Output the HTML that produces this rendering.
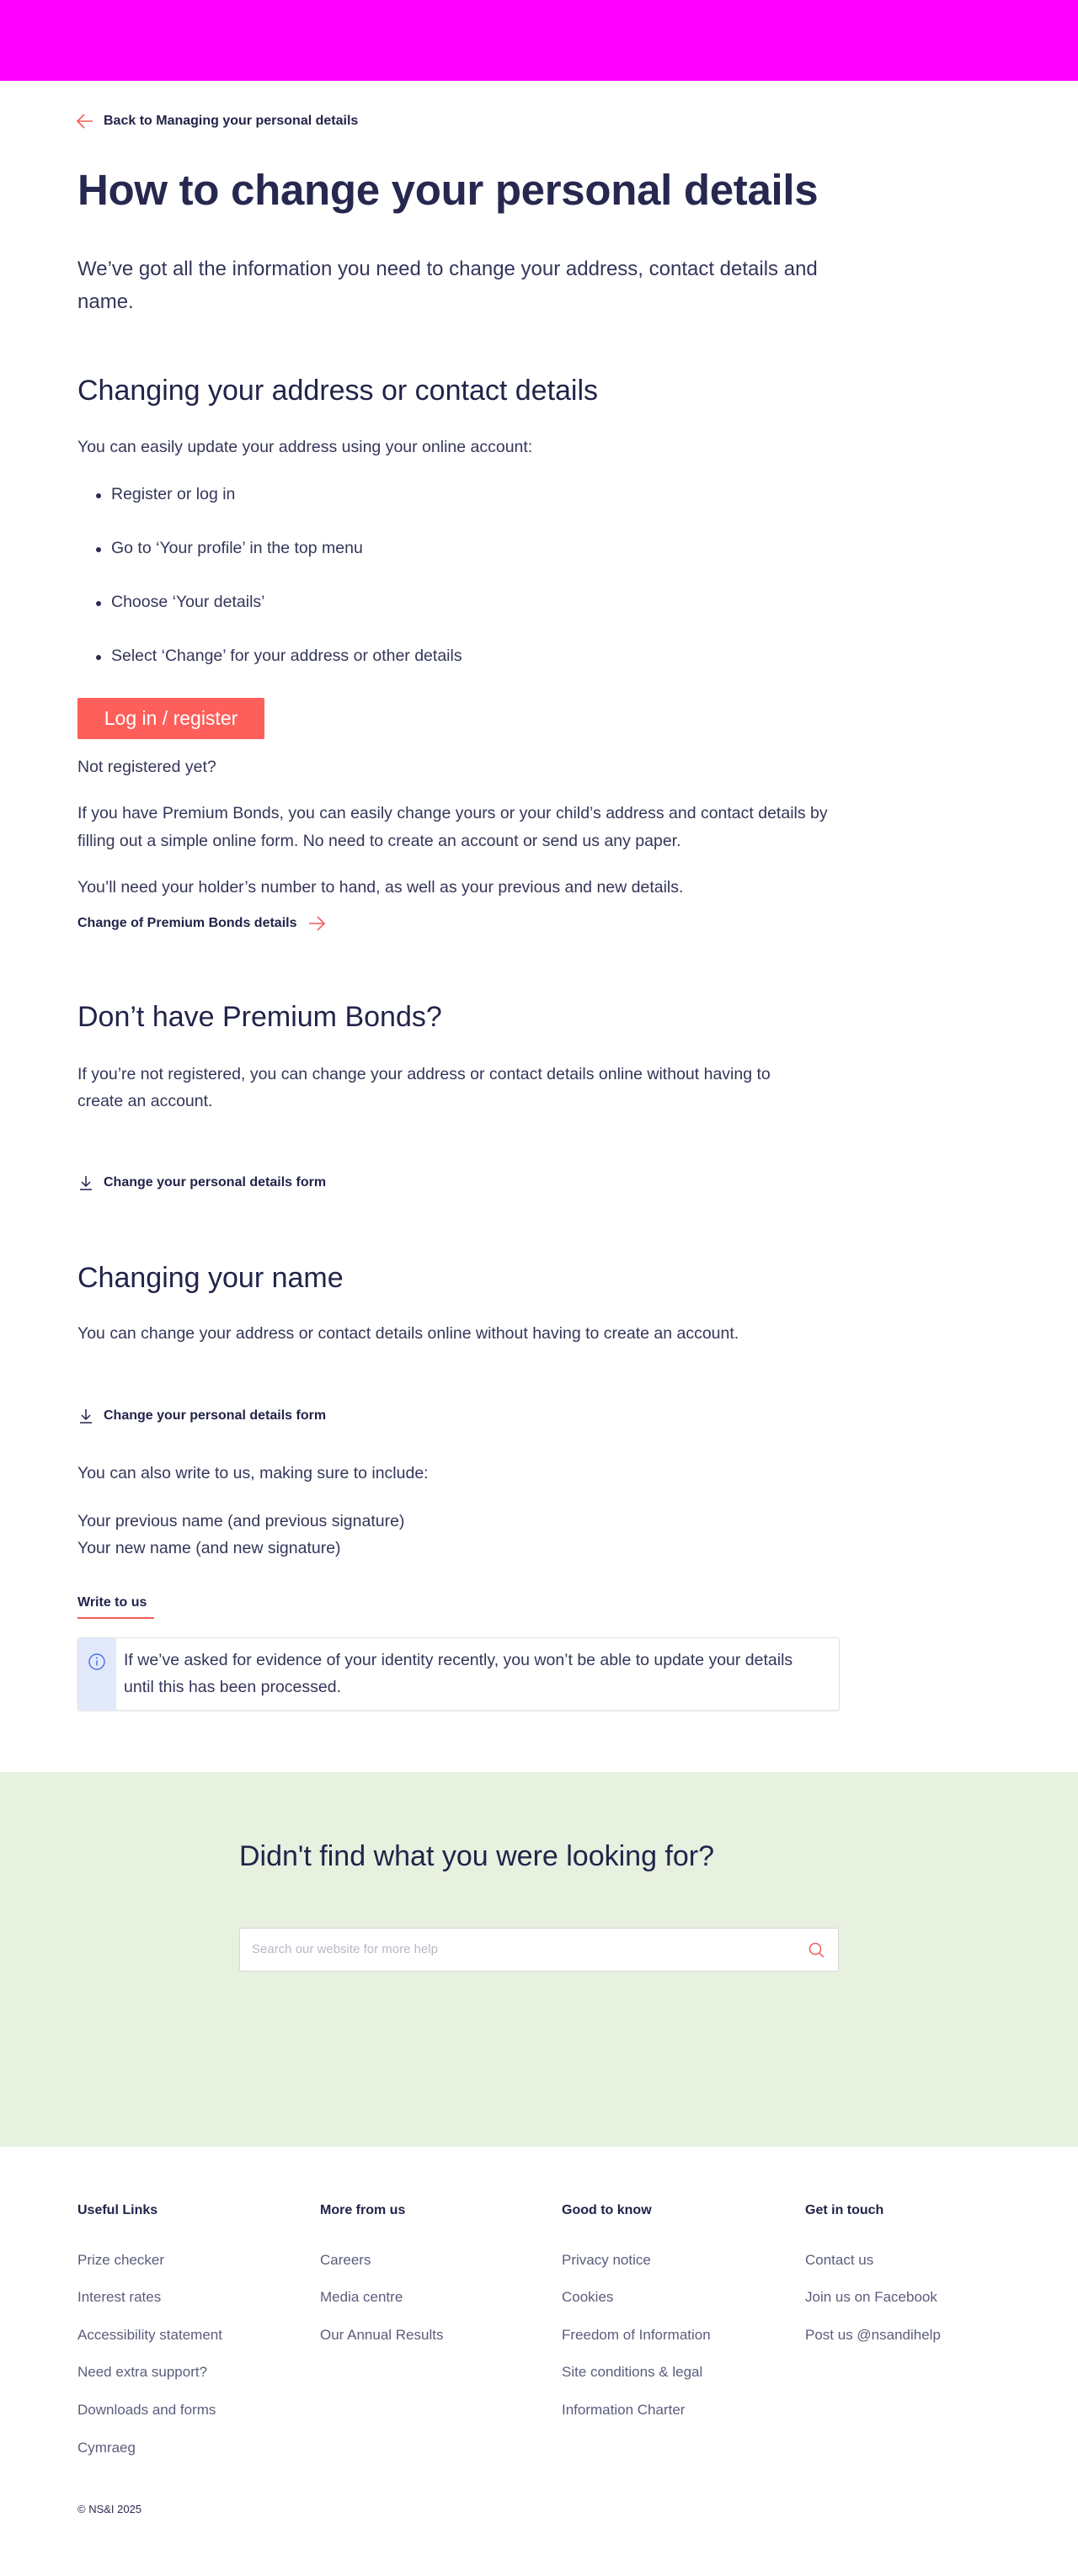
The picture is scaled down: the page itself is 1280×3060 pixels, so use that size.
<!DOCTYPE html>
<html><head><meta charset="utf-8"><style>
*{margin:0;padding:0;box-sizing:border-box}
body{width:1280px;height:3060px;position:relative;background:#fff;font-family:"Liberation Sans",sans-serif;color:#2b2c52;overflow:hidden}
.a{position:absolute;white-space:nowrap}
.p{font-size:19.5px;line-height:32px;color:#34365a}
.h2{font-size:34px;line-height:40px;color:#22244a}
.lk{font-size:16px;font-weight:bold;line-height:24px;color:#22244a}
.fh{font-size:16px;font-weight:bold;line-height:24px;color:#22244a}
.fl{font-size:17px;line-height:24px;color:#5b5d7c}
.dot{position:absolute;width:6px;height:6px;border-radius:50%;background:#2b2c52}
</style></head><body>
<div class="a" style="left:0;top:0;width:1280px;height:96px;background:#ff00ff"></div>

<svg class="a" style="left:91px;top:135px" width="20" height="18" viewBox="0 0 20 18"><path d="M9 1L1 9l8 8M1 9h18" fill="none" stroke="#f25c56" stroke-width="1.6"/></svg>
<div class="a" style="left:123px;top:132px;font-size:16px;line-height:24px;font-weight:bold;color:#22244a">Back to Managing your personal details</div>

<div class="a" style="left:92px;top:196px;font-size:51px;line-height:60px;font-weight:bold;color:#26284f;letter-spacing:-0.3px">How to change your personal details</div>

<div class="a" style="left:92px;top:300px;font-size:24px;line-height:39px;color:#34365a;white-space:normal;width:920px">We’ve got all the information you need to change your address, contact details and name.</div>

<div class="a h2" style="left:92px;top:444px">Changing your address or contact details</div>
<div class="a p" style="left:92px;top:515px">You can easily update your address using your online account:</div>
<div class="dot" style="left:114px;top:586px"></div><div class="a p" style="left:132px;top:571px">Register or log in</div>
<div class="dot" style="left:114px;top:650px"></div><div class="a p" style="left:132px;top:635px">Go to ‘Your profile’ in the top menu</div>
<div class="dot" style="left:114px;top:714px"></div><div class="a p" style="left:132px;top:699px">Choose ‘Your details’</div>
<div class="dot" style="left:114px;top:778px"></div><div class="a p" style="left:132px;top:763px">Select ‘Change’ for your address or other details</div>

<div class="a" style="left:92px;top:829px;width:222px;height:49px;background:#fe5f5a;border-radius:2px;color:#fff;font-size:23px;line-height:49px;text-align:center">Log in / register</div>

<div class="a p" style="left:92px;top:895px">Not registered yet?</div>
<div class="a p" style="left:92px;top:950px;line-height:33px;white-space:normal;width:905px">If you have Premium Bonds, you can easily change yours or your child’s address and contact details by filling out a simple online form. No need to create an account or send us any paper.</div>
<div class="a p" style="left:92px;top:1038px">You’ll need your holder’s number to hand, as well as your previous and new details.</div>
<div class="a lk" style="left:92px;top:1085px">Change of Premium Bonds details</div>
<svg class="a" style="left:366px;top:1088px" width="20" height="18" viewBox="0 0 20 18"><path d="M11 1l8 8-8 8M19 9H1" fill="none" stroke="#f25c56" stroke-width="1.6"/></svg>

<div class="a h2" style="left:92px;top:1188px">Don’t have Premium Bonds?</div>
<div class="a p" style="left:92px;top:1260px;white-space:normal;width:870px">If you’re not registered, you can change your address or contact details online without having to create an account.</div>

<svg class="a" style="left:94px;top:1396px" width="16" height="18" viewBox="0 0 16 18"><path d="M8 1v12M3 8l5 5 5-5M1 17h14" fill="none" stroke="#22244a" stroke-width="1.5"/></svg>
<div class="a lk" style="left:123px;top:1393px">Change your personal details form</div>

<div class="a h2" style="left:92px;top:1498px">Changing your name</div>
<div class="a p" style="left:92px;top:1568px">You can change your address or contact details online without having to create an account.</div>

<svg class="a" style="left:94px;top:1673px" width="16" height="18" viewBox="0 0 16 18"><path d="M8 1v12M3 8l5 5 5-5M1 17h14" fill="none" stroke="#22244a" stroke-width="1.5"/></svg>
<div class="a lk" style="left:123px;top:1670px">Change your personal details form</div>

<div class="a p" style="left:92px;top:1734px">You can also write to us, making sure to include:</div>
<div class="a p" style="left:92px;top:1791px">Your previous name (and previous signature)</div>
<div class="a p" style="left:92px;top:1823px">Your new name (and new signature)</div>
<div class="a lk" style="left:92px;top:1892px">Write to us</div>
<div class="a" style="left:92px;top:1921px;width:91px;height:2px;background:#f25c56"></div>

<div class="a" style="left:92px;top:1945px;width:905px;height:87px;border:1px solid #e2e2e6;border-radius:3px;box-shadow:0 1px 2px rgba(0,0,0,.08);overflow:hidden;white-space:normal">
 <div style="position:absolute;left:0;top:0;width:45px;height:100%;background:#e2e9fb"></div>
 <svg style="position:absolute;left:11px;top:17px" width="22" height="22" viewBox="0 0 22 22"><circle cx="11" cy="11" r="9" fill="none" stroke="#4a72e0" stroke-width="1.4"/><path d="M11 9.5v6" stroke="#4a72e0" stroke-width="1.5"/><circle cx="11" cy="6.5" r="1" fill="#4a72e0"/></svg>
 <div style="position:absolute;left:54px;top:10px;width:815px;font-size:19.5px;line-height:32px;color:#34365a;white-space:normal">If we’ve asked for evidence of your identity recently, you won’t be able to update your details until this has been processed.</div>
</div>

<div class="a" style="left:0;top:2105px;width:1280px;height:445px;background:#e8f0e0"></div>
<div class="a" style="left:284px;top:2185px;font-size:34px;line-height:40px;color:#22244a">Didn't find what you were looking for?</div>
<div class="a" style="left:284px;top:2290px;width:712px;height:52px;background:#fff;border:1px solid #d6d8d4;border-radius:3px">
 <div style="position:absolute;left:14px;top:14px;font-size:15px;line-height:22px;color:#b8b9c4">Search our website for more help</div>
 <svg style="position:absolute;left:674px;top:15px" width="22" height="22" viewBox="0 0 22 22"><circle cx="9" cy="9" r="6.5" fill="none" stroke="#f25c56" stroke-width="1.5"/><path d="M13.8 13.8l5 5" stroke="#f25c56" stroke-width="1.5"/></svg>
</div>

<div class="a fh" style="left:92px;top:2614px">Useful Links</div>
<div class="a fh" style="left:380px;top:2614px">More from us</div>
<div class="a fh" style="left:667px;top:2614px">Good to know</div>
<div class="a fh" style="left:956px;top:2614px">Get in touch</div>

<div class="a fl" style="left:92px;top:2673px">Prize checker</div>
<div class="a fl" style="left:92px;top:2717px">Interest rates</div>
<div class="a fl" style="left:92px;top:2762px">Accessibility statement</div>
<div class="a fl" style="left:92px;top:2806px">Need extra support?</div>
<div class="a fl" style="left:92px;top:2851px">Downloads and forms</div>
<div class="a fl" style="left:92px;top:2896px">Cymraeg</div>

<div class="a fl" style="left:380px;top:2673px">Careers</div>
<div class="a fl" style="left:380px;top:2717px">Media centre</div>
<div class="a fl" style="left:380px;top:2762px">Our Annual Results</div>

<div class="a fl" style="left:667px;top:2673px">Privacy notice</div>
<div class="a fl" style="left:667px;top:2717px">Cookies</div>
<div class="a fl" style="left:667px;top:2762px">Freedom of Information</div>
<div class="a fl" style="left:667px;top:2806px">Site conditions &amp; legal</div>
<div class="a fl" style="left:667px;top:2851px">Information Charter</div>

<div class="a fl" style="left:956px;top:2673px">Contact us</div>
<div class="a fl" style="left:956px;top:2717px">Join us on Facebook</div>
<div class="a fl" style="left:956px;top:2762px">Post us @nsandihelp</div>

<div class="a" style="left:92px;top:2972px;font-size:13px;line-height:18px;color:#2b2c52">© NS&amp;I 2025</div>
</body></html>
